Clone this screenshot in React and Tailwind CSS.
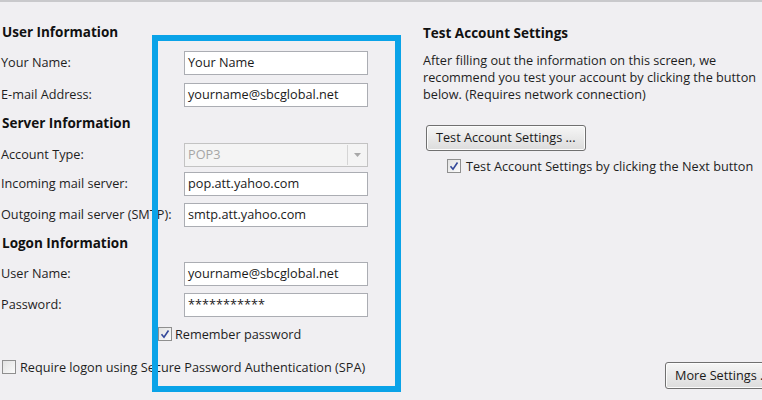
import React from "react";

const font = { fontFamily: '"Open Sans", "Liberation Sans", sans-serif' };

function Field({ value, muted }) {
  return (
    <div
      className={
        "h-[24px] w-[184px] border border-[#abadb3] bg-white px-[3px] flex items-center text-[12.7px] " +
        (muted ? "text-[#a0a0a0]" : "text-[#1a1a1a]")
      }
    >
      {value}
    </div>
  );
}

function Check({ checked }) {
  return (
    <span className="w-[14px] h-[14px] border border-[#8f8f8f] bg-gradient-to-br from-[#e2e2e2] to-[#fbfbfb] flex items-center justify-center shrink-0">
      {checked && (
        <svg width="10" height="10" viewBox="0 0 10 10">
          <path d="M1.5 5.2 L4 8.2 L8.5 1.5" fill="none" stroke="#33489a" strokeWidth="1.6" />
        </svg>
      )}
    </span>
  );
}

function Row({ label, children, className = "" }) {
  return (
    <div className={"flex items-center " + className}>
      <span className="w-[184px] shrink-0 pl-[1px] text-[12.7px] text-[#1e1e1e] whitespace-nowrap">{label}</span>
      {children}
    </div>
  );
}

function Heading({ children, className = "" }) {
  return <div className={"text-[13.5px] font-bold text-[#111] pl-[2px] " + className}>{children}</div>;
}

export default function App() {
  return (
    <div className="relative w-[762px] h-[400px] overflow-hidden bg-[#f0eff2]" style={font}>
      {/* top separator */}
      <div className="h-[2px] bg-[#c9c9cc]" />

      <div className="flex">
        {/* Left column */}
        <div className="w-[423px] shrink-0 flex flex-col">
          <Heading className="mt-[21px] leading-[18px]">User Information</Heading>
          <Row label="Your Name:" className="mt-[10px]">
            <Field value="Your Name" />
          </Row>
          <Row label="E-mail Address:" className="mt-[8px]">
            <Field value="yourname@sbcglobal.net" />
          </Row>
          <Heading className="mt-[7px] leading-[18px]">Server Information</Heading>
          <Row label="Account Type:" className="mt-[11px]">
            <div className="h-[24px] w-[184px] border border-[#c3c3c3] bg-[#f4f4f4] flex items-center text-[12.7px] text-[#a6a6a6]">
              <span className="flex-1 px-[3px]">POP3</span>
              <span className="w-[19px] h-[20px] mr-[1px] border-l border-[#d5d5d5] flex items-center justify-center">
                <svg width="7" height="4" viewBox="0 0 7 4">
                  <path d="M0 0 L7 0 L3.5 4 Z" fill="#a8a8a8" />
                </svg>
              </span>
            </div>
          </Row>
          <Row label="Incoming mail server:" className="mt-[5px]">
            <Field value="pop.att.yahoo.com" />
          </Row>
          <Row label="Outgoing mail server (SMTP):" className="mt-[7px]">
            <Field value="smtp.att.yahoo.com" />
          </Row>
          <Heading className="mt-[7px] leading-[18px]">Logon Information</Heading>
          <Row label="User Name:" className="mt-[10px]">
            <Field value="yourname@sbcglobal.net" />
          </Row>
          <Row label="Password:" className="mt-[7px]">
            <Field value="***********" />
          </Row>
          <div className="flex items-center gap-[3px] ml-[158px] mt-[9px] text-[12.7px] text-[#1e1e1e] leading-[16px]">
            <Check checked />
            <span>Remember password</span>
          </div>
          <div className="flex items-center gap-[4px] ml-[2px] mt-[17px] text-[12.7px] text-[#1e1e1e] leading-[16px] whitespace-nowrap">
            <Check />
            <span>Require logon using Secure Password Authentication (SPA)</span>
          </div>
        </div>

        {/* Right column */}
        <div className="flex-1 flex flex-col whitespace-nowrap">
          <div className="mt-[22px] text-[13.5px] font-bold text-[#111] leading-[18px]">Test Account Settings</div>
          <div className="mt-[10px] text-[12.7px] leading-[17px] text-[#1e1e1e]">
            <div>After filling out the information on this screen, we</div>
            <div>recommend you test your account by clicking the button</div>
            <div>below. (Requires network connection)</div>
          </div>
          <button className="mt-[22px] ml-[3px] self-start h-[26px] px-[9px] border border-[#707070] rounded-[3px] bg-gradient-to-b from-[#f6f6f6] to-[#dcdcdc] text-[12.7px] text-[#1a1a1a] shadow-[inset_0_0_0_1px_#fcfcfc]">
            Test Account Settings ...
          </button>
          <div className="flex items-center gap-[5px] ml-[24px] mt-[7px] text-[12.7px] text-[#1e1e1e] leading-[16px]">
            <Check checked />
            <span>Test Account Settings by clicking the Next button</span>
          </div>
        </div>
      </div>

      {/* More Settings button, cut off at the right edge */}
      <div className="absolute left-[665px] top-[362px]">
        <button className="h-[27px] pl-[9px] pr-[20px] border border-[#707070] rounded-[3px] bg-gradient-to-b from-[#f6f6f6] to-[#dcdcdc] text-[12.7px] text-[#1a1a1a] whitespace-nowrap shadow-[inset_0_0_0_1px_#fcfcfc]">
          More Settings ...
        </button>
      </div>

      {/* Blue highlight annotation */}
      <div className="absolute left-[152px] top-[35px] w-[249px] h-[357px] border-[6px] border-[#0aa3e8] pointer-events-none" />
    </div>
  );
}
